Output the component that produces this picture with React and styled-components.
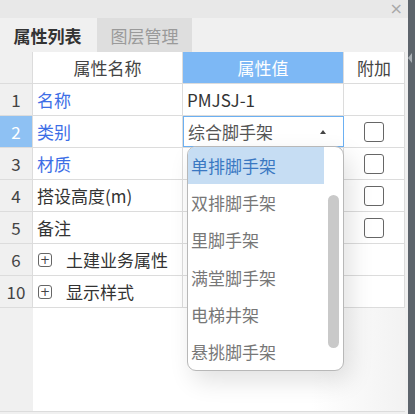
import React from "react";
import styled, { createGlobalStyle } from "styled-components";

const rows = [
  { no: "1", name: "名称", blue: true, value: "PMJSJ-1" },
  { no: "2", name: "类别", blue: true, select: true, check: true, active: true },
  { no: "3", name: "材质", blue: true, check: true },
  { no: "4", name: "搭设高度(m)", check: true },
  { no: "5", name: "备注", check: true },
  { no: "6", name: "土建业务属性", group: true },
  { no: "10", name: "显示样式", group: true },
];

const options = ["单排脚手架", "双排脚手架", "里脚手架", "满堂脚手架", "电梯井架", "悬挑脚手架"];

const App = () => {
  return (
    <>
      <GlobalStyle />
      <Frame>
        <Panel>
          <TopBar>
            <Close>×</Close>
          </TopBar>
          <Tabs>
            <Tab active>属性列表</Tab>
            <Tab>图层管理</Tab>
          </Tabs>
          <TableWrap>
            <Grid>
              <IndexCell />
              <HeadCell>属性名称</HeadCell>
              <HeadCell blue>属性值</HeadCell>
              <HeadCell>附加</HeadCell>
              {rows.map((r) => (
                <React.Fragment key={r.no}>
                  <IndexCell active={r.active}>{r.no}</IndexCell>
                  <NameCell blue={r.blue}>
                    {r.group && <Plus>+</Plus>}
                    {r.name}
                  </NameCell>
                  <ValueCell>
                    {r.select ? (
                      <SelectBox>
                        综合脚手架
                        <Caret />
                      </SelectBox>
                    ) : (
                      r.value
                    )}
                  </ValueCell>
                  <ExtraCell>{r.check && <Check />}</ExtraCell>
                </React.Fragment>
              ))}
            </Grid>
            <Filler>
              <FillIndex />
              <FillBody />
            </Filler>
            <Dropdown>
              <OptionList>
                {options.map((o, i) => (
                  <Option key={o} selected={i === 0}>
                    {o}
                  </Option>
                ))}
              </OptionList>
              <Track>
                <Thumb />
              </Track>
            </Dropdown>
          </TableWrap>
        </Panel>
        <Strip>
          <StripArrow />
        </Strip>
      </Frame>
    </>
  );
};

export default App;

const GlobalStyle = createGlobalStyle`
  html, body {
    margin: 0;
    padding: 0;
    background: #f0f0f0;
  }
  body {
    font-family: "Noto Sans CJK SC", "Noto Sans", sans-serif;
  }
`;

const Frame = styled.div`
  display: flex;
  width: 415px;
  height: 414px;
  overflow: hidden;
`;

const Panel = styled.div`
  width: 408px;
  display: flex;
  flex-direction: column;
  background: #f0f0f0;
`;

const Strip = styled.div`
  width: 7px;
  background: #5d646c;
  position: relative;
`;

const StripArrow = styled.div`
  position: absolute;
  top: 53px;
  left: 0;
  width: 0;
  height: 0;
  border-top: 5px solid transparent;
  border-bottom: 5px solid transparent;
  border-right: 4px solid #aab0b6;
`;

const TopBar = styled.div`
  height: 18px;
  background: #e8e8e8;
  display: flex;
  justify-content: flex-end;
  align-items: center;
  padding-right: 5px;
`;

const Close = styled.span`
  font-family: "DejaVu Sans", sans-serif;
  font-size: 16px;
  line-height: 16px;
  color: #a8a8a8;
`;

const Tabs = styled.div`
  height: 34px;
  display: flex;
  gap: 2px;
  background: #f0f0f0;
`;

const Tab = styled.div`
  width: 95px;
  display: flex;
  align-items: center;
  justify-content: center;
  font-size: 17px;
  font-weight: ${(p) => (p.active ? 700 : 400)};
  color: ${(p) => (p.active ? "#333" : "#9a9a9a")};
  background: ${(p) => (p.active ? "#f0f0f0" : "#dedede")};
`;

const TableWrap = styled.div`
  position: relative;
  flex: 1;
  display: flex;
  flex-direction: column;
  width: 405px;
  border-bottom: 1px solid #dcdcdc;
  margin-bottom: 2px;
`;

const Grid = styled.div`
  display: grid;
  grid-template-columns: 33px 150px 161px 61px;
  grid-auto-rows: 32px;
  font-size: 17px;
  color: #333;
`;

const cell = `
  display: flex;
  align-items: center;
  border-right: 1px solid #dcdcdc;
  border-bottom: 1px solid #dcdcdc;
  box-sizing: border-box;
  background: #fff;
  white-space: nowrap;
`;

const IndexCell = styled.div`
  ${cell}
  justify-content: center;
  background: ${(p) => (p.active ? "#8ec1f3" : "#f0f0f0")};
  color: ${(p) => (p.active ? "#fff" : "#444")};
`;

const HeadCell = styled.div`
  ${cell}
  justify-content: center;
  background: ${(p) => (p.blue ? "#7db8f5" : "#fff")};
  color: ${(p) => (p.blue ? "#fff" : "#444")};
`;

const NameCell = styled.div`
  ${cell}
  padding-left: 4px;
  color: ${(p) => (p.blue ? "#3d6ee6" : "#333")};
`;

const Plus = styled.span`
  width: 12px;
  height: 12px;
  border: 1px solid #666;
  border-radius: 3px;
  font-size: 12px;
  line-height: 12px;
  display: inline-flex;
  justify-content: center;
  align-items: center;
  margin-right: 14px;
  margin-left: 1px;
  color: #444;
  font-family: "DejaVu Sans", sans-serif;
`;

const ValueCell = styled.div`
  ${cell}
  padding-left: 4px;
  color: #333;
  position: relative;
`;

const SelectBox = styled.div`
  position: absolute;
  left: 0;
  top: 0;
  right: -1px;
  bottom: 0;
  border: 1px solid #6cb0f2;
  display: flex;
  align-items: center;
  padding-left: 4px;
  color: #555;
  background: #fff;
`;

const Caret = styled.span`
  position: absolute;
  right: 17px;
  top: 13px;
  width: 0;
  height: 0;
  border-left: 3px solid transparent;
  border-right: 3px solid transparent;
  border-bottom: 4px solid #444;
`;

const ExtraCell = styled.div`
  ${cell}
  justify-content: center;
`;

const Check = styled.span`
  width: 18px;
  height: 18px;
  border: 1px solid #666;
  border-radius: 3px;
  background: #fff;
`;

const Filler = styled.div`
  flex: 1;
  display: flex;
`;

const FillIndex = styled.div`
  width: 33px;
  background: #f0f0f0;
`;

const FillBody = styled.div`
  flex: 1;
  background: linear-gradient(to right, #fff 0%, #fff 75%, #f2f2f2 100%);
`;

const Dropdown = styled.div`
  position: absolute;
  left: 187px;
  top: 94px;
  width: 155px;
  height: 223px;
  background: #fff;
  border: 1px solid #b8b8b8;
  border-radius: 9px;
  box-shadow: 6px 10px 24px rgba(0, 0, 0, 0.12);
  display: flex;
  overflow: hidden;
`;

const OptionList = styled.div`
  width: 136px;
  display: flex;
  flex-direction: column;
`;

const Option = styled.div`
  height: 37.5px;
  display: flex;
  align-items: center;
  padding-left: 3px;
  font-size: 17px;
  color: ${(p) => (p.selected ? "#3a78c2" : "#777")};
  background: ${(p) => (p.selected ? "#c6ddf3" : "transparent")};
`;

const Track = styled.div`
  flex: 1;
  padding: 48px 4px 22px 4px;
  display: flex;
`;

const Thumb = styled.div`
  flex: 1;
  background: #c9c9c9;
  border-radius: 6px;
`;
